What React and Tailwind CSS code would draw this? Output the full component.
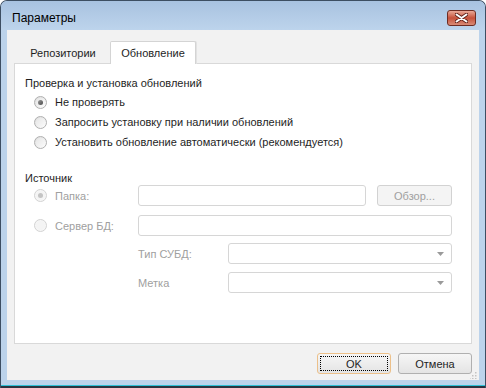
import React from 'react';

const Radio = ({ checked, disabled }) => (
  <span
    className={`flex h-[13px] w-[13px] shrink-0 items-center justify-center rounded-full border ${
      disabled ? 'border-[#d3d3d3] bg-[#f6f6f6]' : 'border-[#b0b0b0] bg-gradient-to-br from-[#dcdcdc] to-[#ffffff]'
    }`}
  >
    <span
      className={`flex h-[9px] w-[9px] items-center justify-center rounded-full ${
        disabled ? 'bg-[#f4f4f4]' : 'bg-gradient-to-br from-[#e6e6e6] to-[#fafafa]'
      }`}
    >
      {checked && (
        <span
          className={`h-[5px] w-[5px] rounded-full ${
            disabled ? 'bg-[#c4c4c4]' : 'bg-gradient-to-br from-[#9a9a9a] to-[#4a4a4a]'
          }`}
        />
      )}
    </span>
  </span>
);

const Field = ({ className = '' }) => (
  <div className={`h-[21px] rounded-[3px] border border-[#d6d6d6] bg-white ${className}`} />
);

const Select = () => (
  <div className="flex h-[21px] w-[224px] items-center justify-end rounded-[3px] border border-[#d6d6d6] bg-white pr-[7px]">
    <svg width="7" height="4" viewBox="0 0 7 4">
      <path d="M0 0h7L3.5 4z" fill="#9a9a9a" />
    </svg>
  </div>
);

export default function App() {
  return (
    <div className="h-[388px] w-[486px] font-['Liberation_Sans',Arial,sans-serif] text-[11px] leading-[16px] text-[#1e1e1e]">
      <div className="flex h-full w-full flex-col rounded-t-[7px] border border-b-0 border-[#3d4e62] bg-[#bcd3eb]">
        {/* Title bar */}
        <div className="flex h-[29px] items-center rounded-t-[6px] bg-gradient-to-b from-[#a8c2e0] to-[#bdd4ec] pl-[11px] pr-[9px]">
          <span className="flex-1 pt-[5px] text-[12px] text-black">Параметры</span>
          <div className="mt-[5px] flex h-[16px] w-[29px] items-center justify-center rounded-[3px] border border-[#6e2c22] bg-gradient-to-b from-[#e9a897] via-[#c5503a] to-[#d98b76]">
            <svg width="13" height="10" viewBox="0 0 13 10">
              <path d="M1.5 1.5l10 7M11.5 1.5l-10 7" stroke="#5a1e16" strokeWidth="3.6" strokeLinecap="round" />
              <path d="M1.5 1.5l10 7M11.5 1.5l-10 7" stroke="#ffffff" strokeWidth="2" strokeLinecap="round" />
            </svg>
          </div>
        </div>

        {/* Client area */}
        <div className="mx-[6px] flex h-[350px] flex-col bg-[#f2f2f2] px-[7px] pt-[10px]">
          {/* Tabs */}
          <div className="relative z-10 flex h-[23px] items-end pl-[2px]">
            <div className="flex h-[21px] w-[94px] items-center justify-center">Репозитории</div>
            <div className="-mb-px flex h-[23px] w-[86px] items-center justify-center rounded-t-[2px] border border-b-0 border-[#d4d4d4] bg-white shadow-[1px_0_0_#e2e2e2]">
              Обновление
            </div>
          </div>

          {/* Panel */}
          <div className="flex h-[281px] flex-col border border-[#d9d9d9] bg-white pl-[10px] pt-[11px]">
            <div>Проверка и установка обновлений</div>
            <div className="mt-[1px] flex flex-col pl-[9px]">
              <div className="flex h-[20px] items-center gap-[8px]">
                <Radio checked />
                <span>Не проверять</span>
              </div>
              <div className="flex h-[20px] items-center gap-[8px]">
                <Radio />
                <span>Запросить установку при наличии обновлений</span>
              </div>
              <div className="flex h-[20px] items-center gap-[8px]">
                <Radio />
                <span>Установить обновление автоматически (рекомендуется)</span>
              </div>
            </div>

            <div className="mt-[18px]">Источник</div>
            <div className="-mt-px flex h-[21px] items-center">
              <div className="flex w-[113px] items-center gap-[8px] pl-[9px] text-[#a0a0a0]">
                <Radio checked disabled />
                <span>Папка:</span>
              </div>
              <Field className="w-[228px]" />
              <div className="ml-[11px] flex h-[21px] w-[75px] items-center justify-center rounded-[3px] border border-[#d2d2d2] bg-[#f4f4f4] text-[#a0a0a0]">
                Обзор...
              </div>
            </div>
            <div className="mt-[9px] flex h-[21px] items-center">
              <div className="flex w-[113px] items-center gap-[8px] pl-[9px] text-[#a0a0a0]">
                <Radio disabled />
                <span>Сервер БД:</span>
              </div>
              <Field className="w-[314px]" />
            </div>
            <div className="mt-[7px] flex h-[21px] items-center">
              <div className="ml-[113px] w-[90px] text-[#a0a0a0]">Тип СУБД:</div>
              <Select />
            </div>
            <div className="mt-[8px] flex h-[21px] items-center">
              <div className="ml-[113px] w-[90px] text-[#a0a0a0]">Метка</div>
              <Select />
            </div>
          </div>

          {/* Buttons */}
          <div className="relative flex flex-1 items-start justify-end gap-[7px] pt-[9px]">
            <div className="flex h-[21px] w-[74px] items-center justify-center rounded-[3px] border border-[#ecc08a] bg-gradient-to-b from-[#f6f6f6] to-[#e4e4e4] p-[2px]">
              <div className="flex h-full w-full items-center justify-center border border-dotted border-black">OK</div>
            </div>
            <div className="flex h-[21px] w-[74px] items-center justify-center rounded-[3px] border border-[#b0b0b0] bg-gradient-to-b from-[#f6f6f6] to-[#e4e4e4]">
              Отмена
            </div>
            {/* resize grip */}
            <svg className="absolute bottom-[1px] right-[-6px]" width="8" height="8" viewBox="0 0 8 8">
              <rect x="5" y="1" width="1.5" height="1.5" fill="#c3c3c3" />
              <rect x="2" y="4" width="1.5" height="1.5" fill="#c3c3c3" />
              <rect x="5" y="4" width="1.5" height="1.5" fill="#c3c3c3" />
              <rect x="-1" y="7" width="1.5" height="1.5" fill="#c3c3c3" />
              <rect x="2" y="7" width="1.5" height="1.5" fill="#c3c3c3" />
              <rect x="5" y="7" width="1.5" height="1.5" fill="#c3c3c3" />
            </svg>
          </div>
        </div>

        <div className="flex-1 border-b border-[#2ec0d6]" />
        <div className="h-[2px] bg-[#2b3440]" />
      </div>
    </div>
  );
}
